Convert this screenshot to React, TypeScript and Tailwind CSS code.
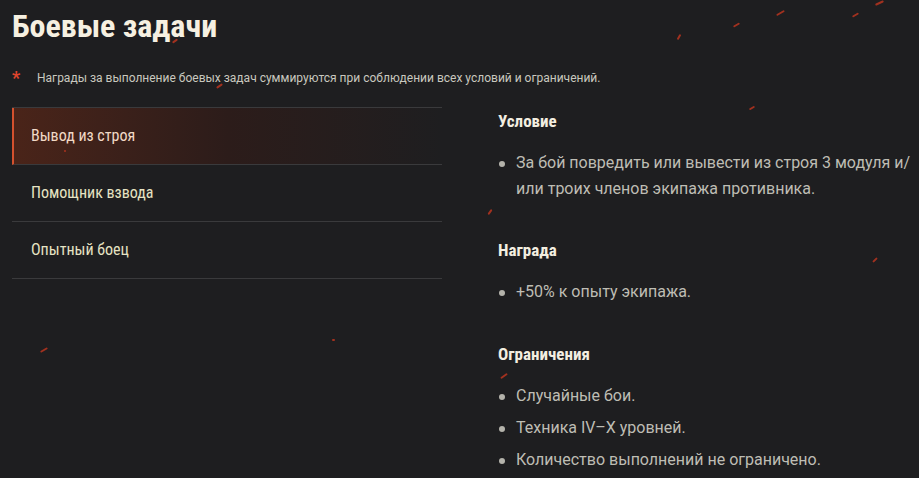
import React from 'react';

const condensed = { fontFamily: '"Roboto Condensed", "Liberation Sans Narrow", "DejaVu Sans Condensed", Roboto, sans-serif' };
const body = { fontFamily: 'Roboto, "Liberation Sans", sans-serif' };

const tabs = ['Вывод из строя', 'Помощник взвода', 'Опытный боец'];

// искры на фоне: [x, y, длина, угол]
const sparks: [number, number, number, number][] = [
  [172, 40, 6, -35],
  [216, 85, 7, -35],
  [676, 36, 6, -60],
  [733, 24, 7, -30],
  [776, 12, 9, -30],
  [852, 14, 7, -30],
  [875, 2, 9, -25],
  [749, 107, 6, -30],
  [487, 211, 6, -55],
  [872, 259, 6, -45],
  [500, 375, 8, -35],
  [40, 349, 8, -30],
  [332, 339, 3, 0],
  [64, 150, 2, 0],
];

function Section({ title, items, className = '' }: { title: string; items: React.ReactNode[]; className?: string }) {
  return (
    <div className={className}>
      <h3 className="text-[17px] font-bold text-[#f3eee0] leading-5" style={condensed}>{title}</h3>
      <ul className="mt-[19px] flex flex-col gap-[6px]">
        {items.map((item, i) => (
          <li key={i} className="flex text-[16px] leading-[26px] text-[#bebdb4]" style={body}>
            <span className="mt-[11px] mr-[11px] ml-[1px] h-[6px] w-[6px] shrink-0 rounded-full bg-[#b4b3ab]" />
            <span>{item}</span>
          </li>
        ))}
      </ul>
    </div>
  );
}

export default function App() {
  return (
    <div className="relative h-[478px] w-[919px] overflow-hidden bg-[#1e1e20] pl-3 pr-[2px] pt-[6px]">
      <h1 className="text-[32px] font-bold leading-10 text-[#f6f0e1]" style={condensed}>Боевые задачи</h1>

      <div className="mt-[24px] flex items-start" style={body}>
        <span className="w-[25px] text-[18px] font-bold leading-4 text-[#e0452d]">*</span>
        <span className="text-[12px] leading-4 text-[#c9c8bf]">
          Награды за выполнение боевых задач суммируются при соблюдении всех условий и ограничений.
        </span>
      </div>

      <div className="mt-[21px] flex">
        <div className="w-[430px] border-t border-[#3a3a3c]">
          {tabs.map((t, i) => (
            <div
              key={t}
              className={
                i === 0
                  ? 'flex h-[57px] items-center border-b border-l-2 border-b-[#3a3a3c] border-l-[#d4512e] bg-gradient-to-r from-[#4a2419] via-[#2c1c1a] to-[#1e1e20] pl-[17px] text-[16px] text-[#f1d9c6]'
                  : 'flex h-[57px] items-center border-b border-[#3a3a3c] pl-[19px] text-[16px] text-[#e6e3c3]'
              }
              style={condensed}
            >
              {t}
            </div>
          ))}
        </div>

        <div className="ml-[56px] flex-1 pt-[4px]">
          <Section
            title="Условие"
            items={['За бой повредить или вывести из строя 3 модуля и/ или троих членов экипажа противника.']}
          />
          <Section className="mt-[38px]" title="Награда" items={['+50% к опыту экипажа.']} />
          <Section
            className="mt-[39px]"
            title="Ограничения"
            items={['Случайные бои.', 'Техника IV–X уровней.', 'Количество выполнений не ограничено.']}
          />
        </div>
      </div>

      {sparks.map(([x, y, len, deg], i) => (
        <span
          key={i}
          className="absolute h-[2px] rounded-full bg-[#c2361f] opacity-80"
          style={{ left: x, top: y, width: len, transform: 'rotate(' + deg + 'deg)' }}
        />
      ))}
    </div>
  );
}
